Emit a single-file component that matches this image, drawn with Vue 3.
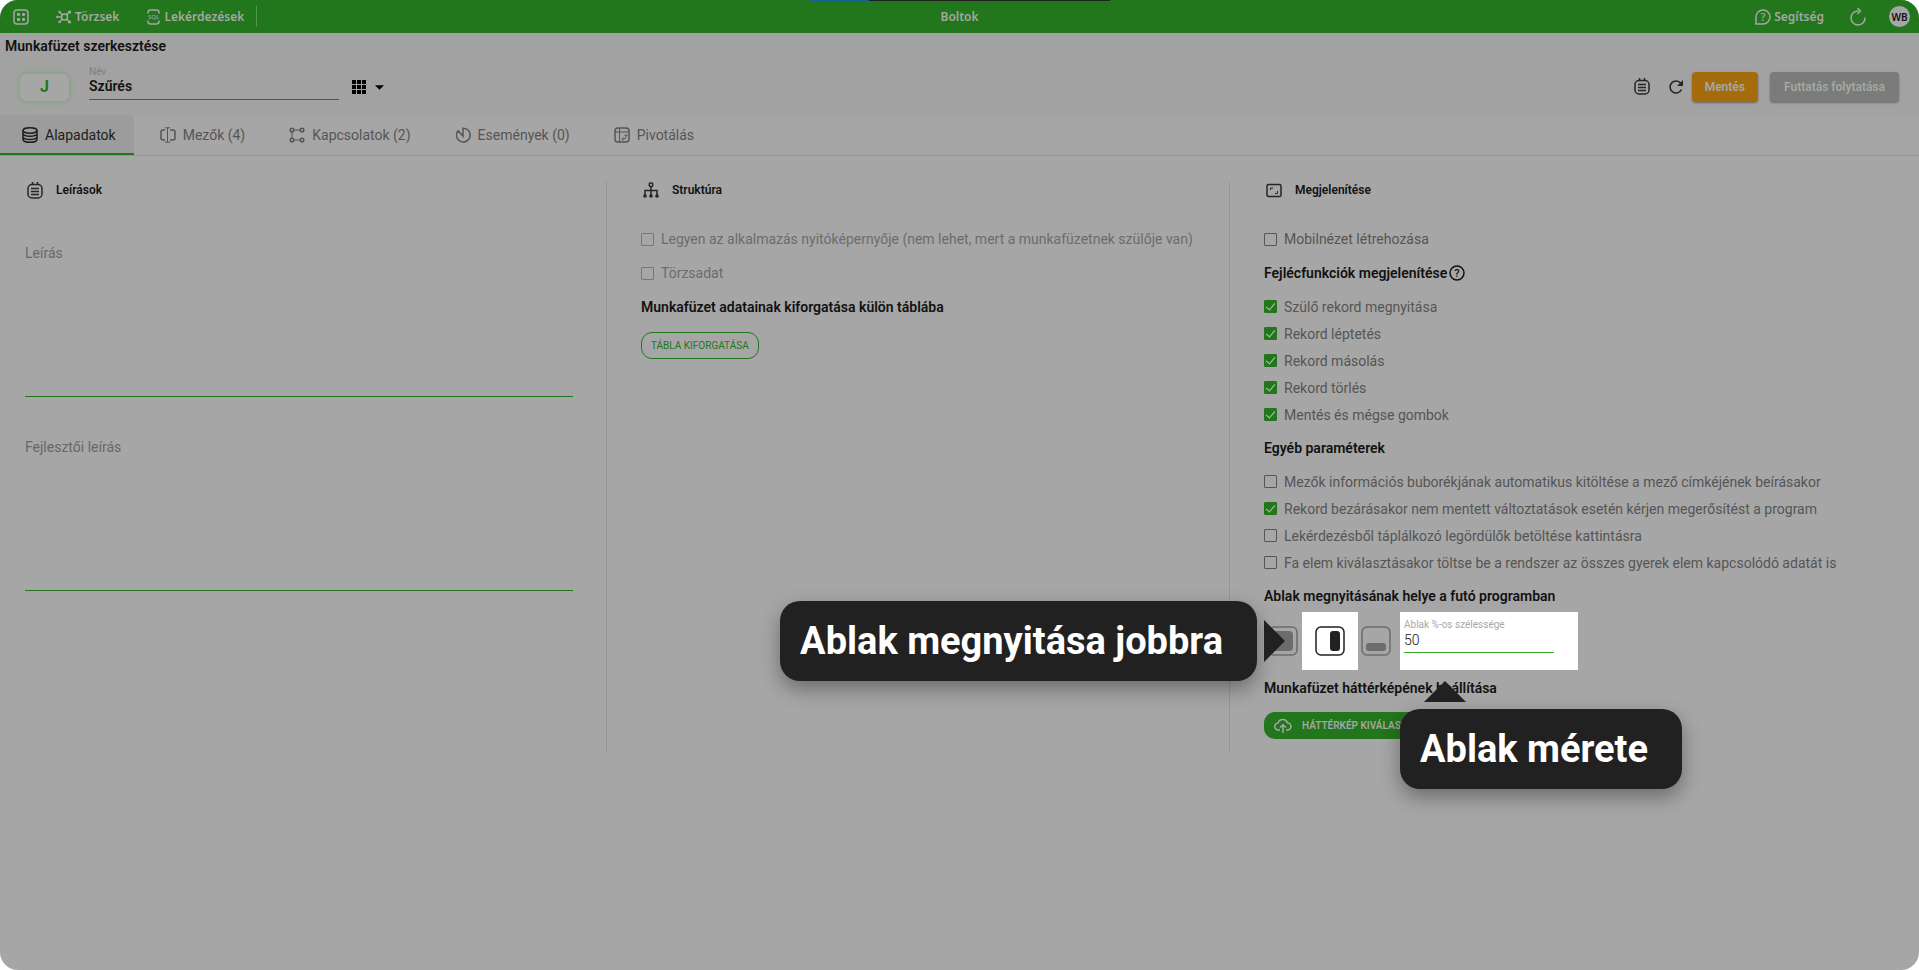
<script setup>
import { ref } from 'vue'

const name = ref('Szűrés')
const description = ref('')
const devDescription = ref('')
const windowWidth = ref('50')

const tabs = [
  { icon: 'database', label: 'Alapadatok' },
  { icon: 'field', label: 'Mezők (4)' },
  { icon: 'links', label: 'Kapcsolatok (2)' },
  { icon: 'events', label: 'Események (0)' },
  { icon: 'pivot', label: 'Pivotálás' }
]
const activeTab = ref('Alapadatok')

const structure = ref([
  { id: 'start', label: 'Legyen az alkalmazás nyitóképernyője (nem lehet, mert a munkafüzetnek szülője van)', on: false },
  { id: 'master', label: 'Törzsadat', on: false }
])
const mobile = ref(false)
const headerOptions = ref([
  { id: 'parent', label: 'Szülő rekord megnyitása', on: true },
  { id: 'step', label: 'Rekord léptetés', on: true },
  { id: 'copy', label: 'Rekord másolás', on: true },
  { id: 'delete', label: 'Rekord törlés', on: true },
  { id: 'save', label: 'Mentés és mégse gombok', on: true }
])
const otherOptions = ref([
  { id: 'bubble', label: 'Mezők információs buborékjának automatikus kitöltése a mező címkéjének beírásakor', on: false },
  { id: 'confirm', label: 'Rekord bezárásakor nem mentett változtatások esetén kérjen megerősítést a program', on: true },
  { id: 'lazy', label: 'Lekérdezésből táplálkozó legördülők betöltése kattintásra', on: false },
  { id: 'tree', label: 'Fa elem kiválasztásakor töltse be a rendszer az összes gyerek elem kapcsolódó adatát is', on: false }
])
</script>

<template>
  <div class="page">
    <header class="topbar">
      <div class="load"></div>
      <nav class="menu">
        <button class="bar-btn apps" aria-label="Alkalmazások">
          <svg class="icon" viewBox="0 0 16 16"><rect x="1" y="1" width="14" height="14" rx="3" /><g class="solid"><rect x="4" y="4" width="3" height="3" rx="1" /><rect x="9" y="4" width="3" height="3" rx="1" /><rect x="4" y="9" width="3" height="3" rx="1" /><rect x="9" y="9" width="3" height="3" rx="1" /></g></svg>
        </button>
        <button class="bar-btn master">
          <svg class="icon" viewBox="0 0 16 16"><circle cx="8.5" cy="8" r="3" /><path d="M6.3 5.8 4 3.4M10.7 5.8l2.4-2.4M6.3 10.2 4 12.6M10.7 10.2l2.4 2.4M5.5 8H2.5" /><g class="solid"><circle cx="3.6" cy="3" r="1.3" /><circle cx="13.6" cy="3" r="1.6" /><circle cx="3.6" cy="13" r="1.3" /><circle cx="13.6" cy="13" r="1.6" /><circle cx="1.4" cy="8" r="1.3" /></g></svg>
          Törzsek
        </button>
        <button class="bar-btn query">
          <svg class="icon slim" viewBox="0 0 13 16"><path d="M1 4.500V3.500Q1 1 3.500 1h6Q12 1 12 3.500v1M1 11.500v1Q1 15 3.500 15h6q2.500 0 2.500-2.500v-1" /><text class="glyph" x="6.500" y="10.200" font-size="6">SQL</text></svg>
          Lekérdezések
        </button>
        <span class="bar-line"></span>
      </nav>
      <div class="app-title">Boltok</div>
      <div class="bar-end">
        <button class="bar-btn help">
          <svg class="icon" viewBox="0 0 16 16"><path d="M1 15V8a7 7 0 1 1 7 7z" /><text class="glyph" x="8" y="12" font-size="11">?</text></svg>
          Segítség
        </button>
        <button class="bar-btn reload" aria-label="Frissítés">
          <svg class="icon big" viewBox="0 0 18 18"><path d="M9.500 3A7 7 0 1 0 16 9.500" /><path d="m8.500 0 3 3-3 3" /></svg>
        </button>
        <button class="avatar">WB</button>
      </div>
    </header>

    <section class="head">
      <h1>Munkafüzet szerkesztése</h1>
      <div class="head-row">
        <button class="badge">J</button>
        <div class="field name-field">
          <label for="name">Név</label>
          <input id="name" v-model="name" type="text">
        </div>
        <button class="grid-btn" aria-label="Ikon választása">
          <svg class="grid-icon" viewBox="0 0 14 14"><path d="M0 0h4v4H0zM5 0h4v4H5zM10 0h4v4h-4zM0 5h4v4H0zM5 5h4v4H5zM10 5h4v4h-4zM0 10h4v4H0zM5 10h4v4H5zM10 10h4v4h-4z" /></svg>
          <svg class="caret" viewBox="0 0 10 5"><path d="M0 0h10L5 5z" /></svg>
        </button>
        <div class="actions">
          <button class="tool" aria-label="Jegyzet">
            <svg class="icon tall" viewBox="0 0 16 17"><rect x="1" y="2.500" width="14" height="13.500" rx="4" /><path d="M4 6.500h8M4 9.500h8M4 12.500h8M5.500 0v3M10.500 0v3" /></svg>
          </button>
          <button class="tool" aria-label="Újratöltés">
            <svg class="icon dark" viewBox="0 0 16 16"><path d="M13.500 10.500A6 6 0 1 1 12.800 4.300" /><path class="solid" d="M15 1v6H9z" /></svg>
          </button>
          <button class="btn save">Mentés</button>
          <button class="btn resume" disabled>Futtatás folytatása</button>
        </div>
      </div>
    </section>

    <nav class="tabs">
      <button v-for="t in tabs" :key="t.label" class="tab" :class="{ active: t.label === activeTab }" @click="activeTab = t.label">
        <svg v-if="t.icon === 'database'" class="icon" viewBox="0 0 16 16"><ellipse cx="8" cy="3.500" rx="7" ry="2.700" /><path d="M1 3.500v9Q1.500 15.300 8 15.300t7-2.800v-9M1 7q1 2.200 7 2.200T15 7M1 10.200q1 2.200 7 2.200t7-2.200" /></svg>
        <svg v-else-if="t.icon === 'field'" class="icon" viewBox="0 0 16 16"><path d="M5 3H3Q1 3 1 5v6q0 2 2 2h2M10 3h3q2 0 2 2v6q0 2-2 2h-3" /><path class="fine" d="M7.500 1v14M5 .8h5M5 15.200h5" /></svg>
        <svg v-else-if="t.icon === 'links'" class="icon" viewBox="0 0 16 16"><circle cx="3" cy="3" r="1.800" /><circle cx="13" cy="3" r="1.800" /><circle cx="3" cy="13" r="1.800" /><circle cx="13" cy="13" r="1.800" /><path class="fine" d="M5 3h6M3 5v6M5 13h6" /></svg>
        <svg v-else-if="t.icon === 'events'" class="icon" viewBox="0 0 16 16"><path d="M8 9V1.200a6.900 6.900 0 1 1-5 2.500z" /></svg>
        <svg v-else class="icon" viewBox="0 0 16 16"><rect x="1" y="1" width="14" height="14" rx="3" /><path class="fine" d="M1 5h14M5.500 1v14M8 12h2q2 0 2-2V8M10.500 9 12 7.500 13.500 9M9.300 10.500 7.800 12l1.500 1.500" /></svg>
        {{ t.label }}
      </button>
    </nav>

    <main class="columns">
      <section class="col">
        <h2>
          <svg class="icon tall" viewBox="0 0 16 17"><rect x="1" y="2.500" width="14" height="13.500" rx="4" /><path d="M4 6.500h8M4 9.500h8M4 12.500h8M5.500 0v3M10.500 0v3" /></svg>
          Leírások
        </h2>
        <div class="memo">
          <label for="desc">Leírás</label>
          <textarea id="desc" v-model="description"></textarea>
        </div>
        <div class="memo">
          <label for="dev">Fejlesztői leírás</label>
          <textarea id="dev" v-model="devDescription"></textarea>
        </div>
      </section>

      <section class="col">
        <h2>
          <svg class="icon" viewBox="0 0 16 16"><rect x="6.300" y="1" width="3.400" height="3.400" rx="1" /><path d="M8 4.500V13M2 13V8.500h12V13" /><g class="solid"><circle cx="2" cy="14" r="1.800" /><circle cx="8" cy="14" r="1.800" /><circle cx="14" cy="14" r="1.800" /></g></svg>
          Struktúra
        </h2>
        <label v-for="o in structure" :key="o.id" class="check loose disabled">
          <input v-model="o.on" type="checkbox" disabled><span>{{ o.label }}</span>
        </label>
        <h3>Munkafüzet adatainak kiforgatása külön táblába</h3>
        <button class="outline">TÁBLA KIFORGATÁSA</button>
      </section>

      <section class="col">
        <h2>
          <svg class="icon" viewBox="0 0 16 16"><rect x="1" y="2.500" width="14" height="12" rx="1.500" /><path class="fine" d="M4.500 8V6H7M11.500 9v2.500H9" /></svg>
          Megjelenítése
        </h2>
        <label class="check loose"><input v-model="mobile" type="checkbox"><span>Mobilnézet létrehozása</span></label>
        <h3>
          Fejlécfunkciók megjelenítése
          <svg class="icon" viewBox="0 0 16 16"><circle cx="8" cy="8" r="7" /><text class="glyph" x="8" y="12" font-size="11">?</text></svg>
        </h3>
        <div class="group">
          <label v-for="o in headerOptions" :key="o.id" class="check"><input v-model="o.on" type="checkbox"><span>{{ o.label }}</span></label>
        </div>
        <h3>Egyéb paraméterek</h3>
        <div class="group">
          <label v-for="o in otherOptions" :key="o.id" class="check"><input v-model="o.on" type="checkbox"><span>{{ o.label }}</span></label>
        </div>
        <h3>Ablak megnyitásának helye a futó programban</h3>
        <div class="placement">
          <button class="place" aria-label="Középre">
            <svg viewBox="0 0 30 30"><rect x="1" y="1" width="28" height="28" rx="5" /><rect class="fill" x="5" y="5" width="20" height="20" rx="4" /></svg>
          </button>
          <button class="place lit" aria-label="Jobbra">
            <svg viewBox="0 0 30 30"><rect x="1" y="1" width="28" height="28" rx="5" /><rect class="fill" x="15" y="5" width="10" height="20" rx="3" /></svg>
          </button>
          <button class="place" aria-label="Alulra">
            <svg viewBox="0 0 30 30"><rect x="1" y="1" width="28" height="28" rx="5" /><rect class="fill" x="5" y="17" width="20" height="8" rx="3" /></svg>
          </button>
          <div class="field size-field">
            <label for="size">Ablak %-os szélessége</label>
            <input id="size" v-model="windowWidth" type="text">
            <div class="tip tip-below" role="tooltip">Ablak mérete</div>
          </div>
          <div class="tip tip-left" role="tooltip">Ablak megnyitása jobbra</div>
        </div>
        <h3>Munkafüzet háttérképének beállítása</h3>
        <button class="upload">
          <svg class="icon" viewBox="0 0 18 16"><path d="M6 12H4.500a3.500 3.500 0 0 1-.5-7 5 5 0 0 1 9.500 0 3.500 3.500 0 0 1 0 7H12M9 15V7M6 9.500 9 6.700l3 2.800" /></svg>
          HÁTTÉRKÉP KIVÁLASZTÁSA
        </button>
      </section>
    </main>
  </div>
</template>

<style>
body {
  margin: 0;
  background: #fff;
}
</style>

<style scoped>
.page {
  --green: #22761b;
  min-height: 100vh;
  overflow: hidden;
  border-radius: 18px;
  background: #a6a6a6;
  color: #121212;
  font-family: Roboto, "Noto Sans", sans-serif;
  font-size: 14px;
  line-height: 20px;
}
* { box-sizing: border-box; }
button, input, textarea { font: inherit; color: inherit; }
button {
  display: flex;
  align-items: center;
  justify-content: center;
  padding: 0;
  border: 0;
  background: none;
}
h1, h2, h3 { margin: 0; font-weight: 600; }
.icon {
  flex: none;
  width: 16px;
  height: 16px;
  fill: none;
  stroke: currentColor;
  stroke-width: 1.5;
  overflow: visible;
}
.icon.slim { width: 13px; }
.icon.tall { height: 17px; }
.icon.big { width: 18px; height: 18px; }
.icon .solid { fill: currentColor; stroke: none; }
.icon .fine { stroke-width: 1; }
.icon .glyph { fill: currentColor; stroke: none; text-anchor: middle; font-weight: 500; }

.topbar {
  position: relative;
  display: grid;
  grid-template-columns: 1fr auto 1fr;
  align-items: center;
  height: 33px;
  background: var(--green);
  color: #a6a6a6;
  font-family: "Noto Sans", sans-serif;
  font-size: 12px;
  font-weight: 600;
}
.load {
  position: absolute;
  top: 0;
  left: 50%;
  width: 301px;
  height: 1px;
  margin-left: -151px;
  background: linear-gradient(to right, #135f97 20%, #212121 20%);
}
.menu { display: flex; align-items: center; padding-left: 13px; }
.bar-btn { gap: 3px; height: 33px; }
.apps { margin-right: 27px; }
.master { margin-right: 28px; }
.query { gap: 4px; }
.bar-line { width: 1px; height: 21px; margin-left: 12px; background: #53964e; }
.bar-end { display: flex; align-items: center; justify-content: flex-end; padding-right: 9px; }
.help { margin-right: 25px; }
.reload { margin-right: 22px; }
.avatar {
  width: 21px;
  height: 21px;
  border-radius: 50%;
  background: #a6a6a6;
  color: #121212;
  font-size: 10px;
}

.head { height: 82px; padding: 3px 20px 0 5px; background: #a2a2a2; }
.head-row { display: flex; align-items: center; height: 50px; padding: 2px 0 0 15px; }
h1 { font-size: 14px; }
.badge {
  width: 49px;
  height: 27px;
  margin-top: 10px;
  border-radius: 6px;
  background: #a6a6a6;
  box-shadow: 0 0 4px 1px #7fa37c;
  color: var(--green);
  font-size: 16px;
  font-weight: 700;
}
.field { display: flex; flex-direction: column; }
.field label { color: #7d7d7d; font-size: 10px; line-height: 14px; }
.field input {
  height: 21px;
  padding: 0 0 5px;
  border: 0;
  border-bottom: 1px solid var(--green);
  outline: 0;
  background: none;
}
.name-field { width: 250px; margin-left: 20px; }
.name-field input { font-weight: 600; }
.grid-btn { gap: 9px; margin: 10px 0 0 13px; }
.grid-icon { width: 14px; height: 14px; }
.caret { width: 9px; height: 5px; }
.actions { display: flex; align-items: center; margin-left: auto; padding-top: 10px; }
.tool { margin-right: 18px; color: #262626; }
.tool:first-child { padding-bottom: 2px; }
.tool + .tool { margin-right: 8px; }
.btn {
  height: 30px;
  padding: 0 14px;
  border-radius: 4px;
  box-shadow: 0 1px 2px #6b6b6b;
  color: #a6a6a6;
  font-size: 12px;
  font-weight: 600;
}
.save { margin-right: 12px; padding: 0 13px; background: #a56c0d; }
.resume { background: #797c78; }

.tabs {
  display: flex;
  gap: 4px;
  height: 41px;
  border-bottom: 1px solid #929292;
}
.tab { gap: 7px; height: 40px; padding: 2px 18px 0 22px; border-bottom: 2px solid transparent; color: #555; }
.tab.active { border-bottom-color: var(--green); background: #9c9c9c; color: #1d1d1d; }

.columns {
  display: grid;
  grid-template-columns: 607fr 623fr 689fr;
  padding-top: 26px;
}
.col { min-height: 571px; padding: 0 33px 0 34px; border-right: 1px solid #959595; }
.col:first-child { padding-left: 25px; }
.col:last-child { border-right: 0; }
h2 {
  display: flex;
  align-items: center;
  gap: 13px;
  height: 16px;
  margin-bottom: 31px;
  padding-left: 2px;
  font-size: 12px;
}
h2 .icon { color: #262626; }
h3 { display: flex; align-items: center; gap: 2px; height: 20px; font-size: 14px; }
.memo { display: flex; flex-direction: column; height: 154px; margin: 45px 0 40px; }
.memo + .memo { margin-top: 0; }
.memo label { color: #686868; }
.memo textarea {
  flex: 1;
  resize: none;
  padding: 0;
  border: 0;
  border-bottom: 1px solid var(--green);
  outline: 0;
  background: none;
}
.check { display: flex; align-items: center; gap: 7px; height: 27px; color: #555; }
.check.loose { height: 20px; margin-bottom: 14px; }
.check.disabled { color: #6c6c6c; }
.check input {
  display: grid;
  place-items: center;
  flex: none;
  width: 13px;
  height: 13px;
  margin: 0;
  appearance: none;
  border: 1px solid #555;
  border-radius: 1px;
}
.check.disabled input { border-color: #777; }
.check input:checked { border-color: var(--green); background: var(--green); }
.check input:checked::after {
  content: "";
  width: 4px;
  height: 8px;
  margin-bottom: 2px;
  border: solid #b5c4b4;
  border-width: 0 1px 1px 0;
  transform: rotate(40deg);
}
.group { margin: 10px 0; }
.outline {
  height: 27px;
  margin-top: 15px;
  padding: 0 9px;
  border: 1px solid var(--green);
  border-radius: 11px;
  color: var(--green);
  font-size: 10px;
}
.placement { position: relative; display: flex; height: 58px; margin: 6px 0 8px; }
.place { width: 42px; padding-right: 6px; color: #6c6c6c; }
.place:first-child { width: 38px; padding: 0 4px; }
.place.lit { width: 56px; padding: 0; background: #fff; color: #212121; }
.place svg { width: 30px; height: 30px; fill: none; stroke: currentColor; stroke-width: 1.5; }
.place .fill { fill: currentColor; stroke: none; }
.size-field { --green: #35a82c; position: relative; width: 178px; padding: 6px 24px 0 4px; background: #fff; }
.size-field label { color: #a8a8a8; }
.size-field input { font-weight: 300; }
.tip {
  position: absolute;
  z-index: 2;
  display: flex;
  align-items: center;
  height: 80px;
  padding: 0 34px 0 20px;
  border-radius: 20px;
  background: #212121;
  box-shadow: 0 8px 20px rgba(0, 0, 0, .35);
  color: #fff;
  font-size: 38px;
  font-weight: 700;
  white-space: nowrap;
}
.tip::after { content: ""; position: absolute; border: 21px solid transparent; }
.tip-left { top: -11px; right: calc(100% + 7px); }
.tip-left::after { left: calc(100% + 7px); border-left-color: #212121; border-right: 0; }
.tip-below { top: 97px; left: 0; }
.tip-below::after { bottom: calc(100% + 7px); left: 24px; border-bottom-color: #212121; border-top: 0; }
.upload {
  gap: 10px;
  height: 27px;
  margin-top: 14px;
  padding: 0 12px 0 10px;
  border-radius: 11px;
  background: var(--green);
  color: #a6a6a6;
  font-size: 10px;
  font-weight: 600;
}
.upload .icon { width: 18px; }
</style>
